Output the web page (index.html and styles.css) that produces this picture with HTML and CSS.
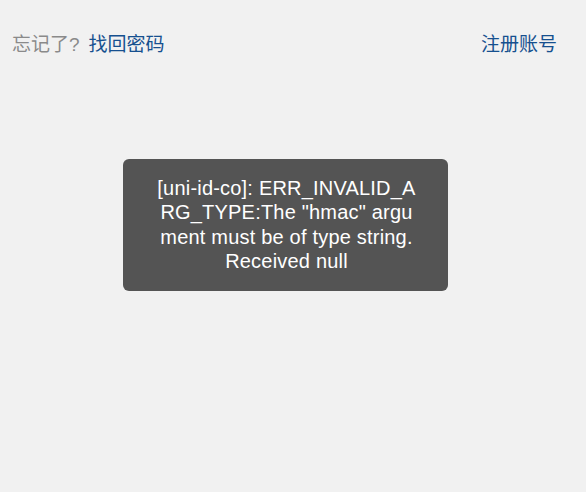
FILE: index.html
```html
<!DOCTYPE html>
<html lang="zh">
<head>
<meta charset="utf-8">
<title>登录</title>
<link rel="stylesheet" href="styles.css">
</head>
<body>
<div class="page">
  <div class="links">
    <div class="forgot"><span class="muted">忘记了?</span><a class="link" href="#">找回密码</a></div>
    <a class="link" href="#">注册账号</a>
  </div>
</div>
<div class="toast">[uni-id-co]: ERR_INVALID_ARG_TYPE:The "hmac" argument must be of type string. Received null</div>
</body>
</html>
```
FILE: styles.css
```css
html, body {
  margin: 0;
  padding: 0;
  background: #f1f1f1;
  height: 100%;
}
body {
  font-family: "Liberation Sans", "Noto Sans CJK SC", sans-serif;
}
.page {
  padding-top: 33px;
}
.links {
  display: flex;
  justify-content: space-between;
  align-items: center;
  padding: 0 29px 0 12px;
  font-size: 19px;
  line-height: 24px;
}
.muted {
  color: #8a8a8a;
  margin-right: 9px;
}
.link {
  color: #16508f;
  text-decoration: none;
}
.toast {
  position: absolute;
  left: 123px;
  top: 159px;
  width: 325px;
  box-sizing: border-box;
  padding: 17px 31px 17px 33px;
  background: rgba(17, 17, 17, 0.7);
  color: #fff;
  border-radius: 6px;
  font-size: 20px;
  line-height: 24.4px;
  letter-spacing: 0.2px;
  text-align: center;
  word-break: break-all;
}
```
